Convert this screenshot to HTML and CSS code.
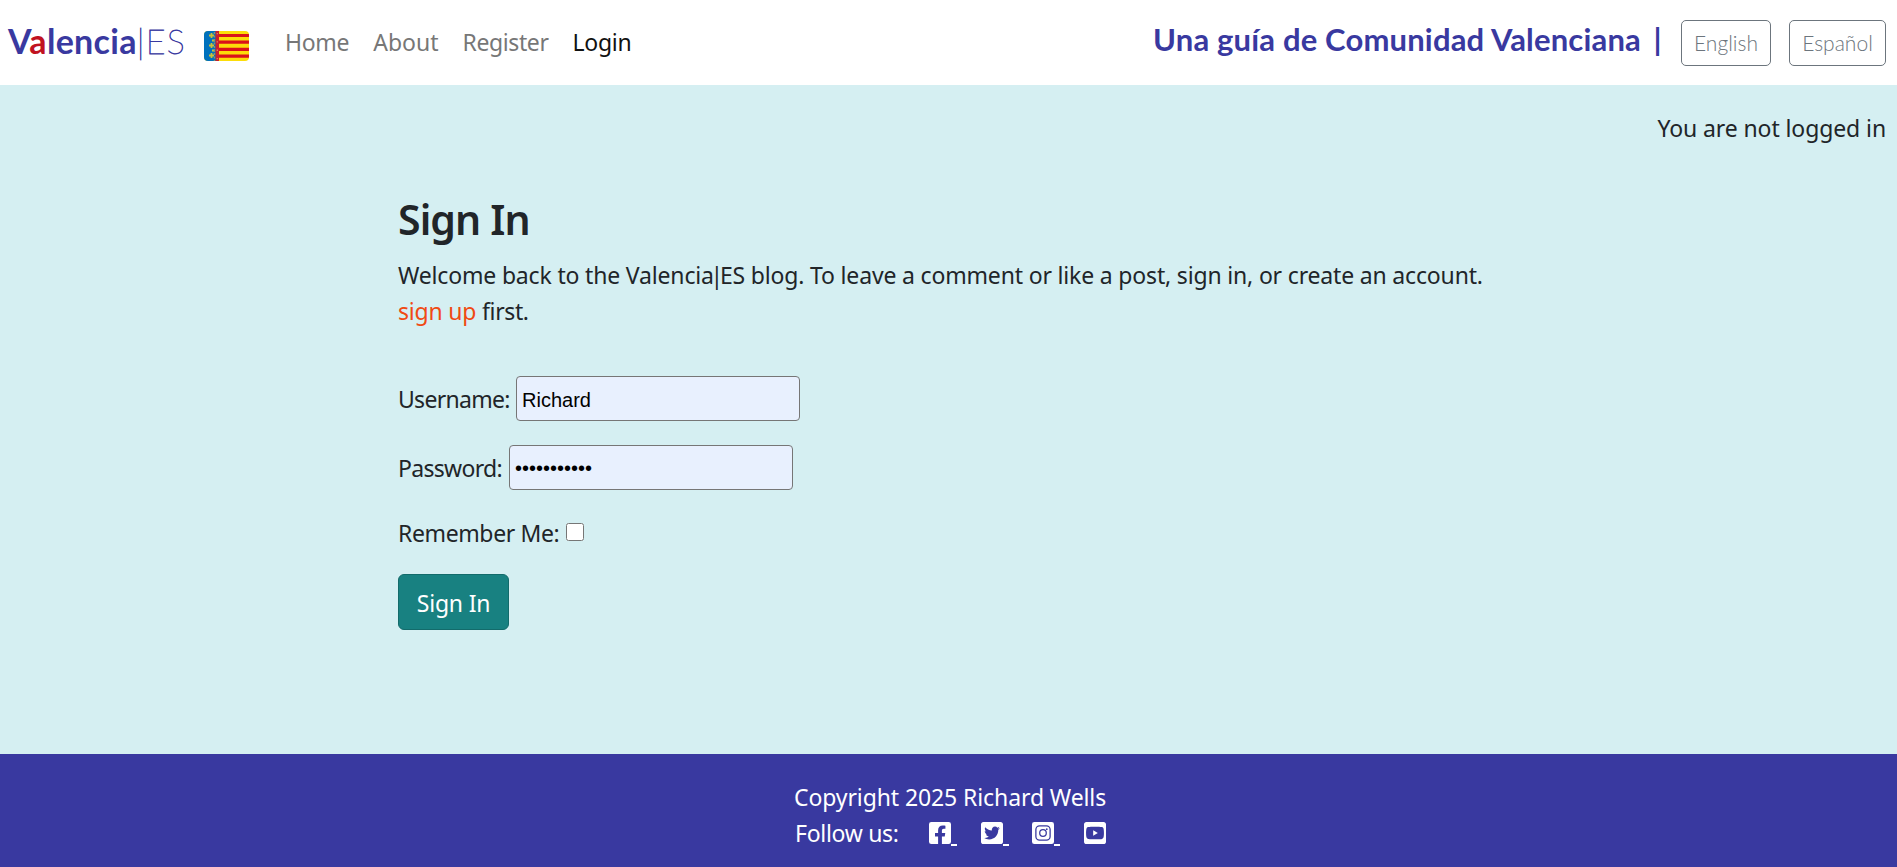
FILE: index.html
```html
<!DOCTYPE html>
<html lang="en">
<head>
<meta charset="utf-8">
<title>Valencia|ES</title>
<link rel="stylesheet" href="styles.css">
</head>
<body>
<nav class="navbar">
  <a class="brand"><span class="brand-bold">V<span class="brand-a">a</span>lencia</span><span class="brand-thin">|ES</span></a>
  <svg class="flag" viewBox="0 0 45 30">
    <clipPath id="flag-shape"><rect width="45" height="30" rx="4"/></clipPath>
    <g clip-path="url(#flag-shape)">
      <rect width="45" height="30" fill="#fcdd09"/>
      <path d="M15 4.500h30M15 11.200h30M15 18.300h30M15 25.200h30" stroke="#da121a" stroke-width="3.200"/>
      <rect width="12" height="30" fill="#0071bc"/>
      <path d="M5 4.500h5M5 14.500h5M5 24.500h5M7.500 2v5M7.500 12v5M7.500 22v5M8 9.500h3M8 19.500h3" stroke="#c9c03a" stroke-width="1.800"/>
      <path d="M10.500 1v29" stroke="#7d9a70" stroke-width="1.500" stroke-dasharray="2 1.500"/>
      <rect x="11.500" width="3.500" height="30" fill="#c8202c"/>
      <path d="M13.300 2v28" stroke="#d8846a" stroke-width="1.300" stroke-dasharray="1.300 7"/>
    </g>
  </svg>
  <div class="links"><a class="home">Home</a><a class="about">About</a><a class="register">Register</a><a class="login">Login</a></div>
  <div class="nav-right">
    <span class="tagline">Una guía de Comunidad Valenciana</span><span class="divider">|</span>
    <button class="lang lang-en">English</button>
    <button class="lang lang-es">Español</button>
  </div>
</nav>
<main class="page">
  <div class="status">You are not logged in</div>
  <section class="content">
    <h1>Sign In</h1>
    <p class="intro">Welcome back to the Valencia<span class="bar">|</span>ES blog. To leave a comment or like a post, sign in, or create an account.<br><a class="signup">sign up</a> <span class="first">first.</span></p>
    <form>
      <div class="field user"><label for="username">Username:</label><input id="username" type="text" value="Richard"></div>
      <div class="field pass"><label for="password">Password:</label><input id="password" type="password" value="12345678901"></div>
      <div class="field remember"><label for="remember">Remember Me:</label><input id="remember" class="check" type="checkbox"></div>
      <button class="submit" type="button">Sign In</button>
    </form>
  </section>
</main>
<footer class="footer">
  <div class="footer-inner">
    <div class="copy">Copyright 2025 Richard Wells</div>
    <div class="follow"><span class="follow-label">Follow us:</span>
      <a class="social"><svg viewBox="0 32 448 448"><path d="M400 32H48A48 48 0 0 0 0 80v352a48 48 0 0 0 48 48h137.250V327.690h-63V256h63v-54.640c0-62.150 37-96.480 93.670-96.480 27.140 0 55.520 4.840 55.520 4.840v61h-31.270c-30.810 0-40.420 19.120-40.420 38.730V256h68.780l-11 71.690h-57.780V480H400a48 48 0 0 0 48-48V80a48 48 0 0 0-48-48z"/></svg></a>
      <a class="social"><svg viewBox="0 32 448 448"><path d="M400 32H48C21.500 32 0 53.500 0 80v352c0 26.500 21.500 48 48 48h352c26.500 0 48-21.500 48-48V80c0-26.500-21.500-48-48-48zm-48.900 158.800c.2 2.800.2 5.700.2 8.500 0 86.700-66 186.600-186.600 186.600-37.200 0-71.700-10.800-100.700-29.400 5.300.6 10.400.8 15.800.8 30.700 0 58.900-10.400 81.400-28-28.800-.6-53-19.500-61.300-45.500 10.100 1.500 19.200 1.500 29.600-1.200-30-6.100-52.500-32.500-52.500-64.400v-.8c8.700 4.900 18.900 7.900 29.600 8.300a65.447 65.447 0 0 1-29.200-54.600c0-12.200 3.200-23.400 8.900-33.100 32.300 39.800 80.800 65.800 135.200 68.600-9.300-44.500 24-80.600 64-80.600 18.900 0 35.900 7.900 47.900 20.700 14.800-2.800 29-8.300 41.600-15.800-4.900 15.200-15.200 28-28.800 36.100 13.200-1.400 26-5.100 37.800-10.200-8.900 13.100-20.100 24.700-32.900 34z"/></svg></a>
      <a class="social"><svg viewBox="0 32 448 448"><rect y="32" width="448" height="448" rx="48"/><rect class="cut" x="79" y="111" width="290" height="290" rx="75"/><circle class="cut" cx="224" cy="256" r="67"/><circle class="dot" cx="301" cy="179" r="18"/></svg></a>
      <a class="social last"><svg viewBox="0 32 448 448"><path d="M186.800 202.100l95.200 54.100-95.200 54.100V202.100zM448 80v352c0 26.500-21.500 48-48 48H48c-26.500 0-48-21.500-48-48V80c0-26.500 21.500-48 48-48h352c26.500 0 48 21.500 48 48zm-42 176.300s0-59.600-7.600-88.200c-4.200-15.800-16.500-28.200-32.200-32.400C337.900 128 224 128 224 128s-113.900 0-142.200 7.700c-15.700 4.200-28 16.600-32.200 32.400-7.600 28.500-7.600 88.200-7.600 88.200s0 59.600 7.600 88.200c4.200 15.800 16.500 27.700 32.200 31.900C110.100 384 224 384 224 384s113.900 0 142.200-7.700c15.700-4.200 28-16.100 32.200-31.900 7.600-28.500 7.600-88.100 7.600-88.100z"/></svg></a>
    </div>
  </div>
</footer>
</body>
</html>
```
FILE: styles.css
```css
* { box-sizing: border-box; }
body {
  margin: 0;
  height: 867px;
  display: flex;
  flex-direction: column;
  overflow: hidden;
  background: #d5eff2;
  color: #212529;
  font: 23px/36px "Noto Sans", sans-serif;
  white-space: nowrap;
}
.navbar {
  height: 85px;
  flex: none;
  display: flex;
  align-items: flex-start;
  padding: 0 11px 0 8px;
  background: #fff;
}
.brand {
  width: 196px;
  padding-top: 20px;
  font: 34px/42px Lato, sans-serif;
  color: #3939a0;
}
.brand-bold { font-weight: 700; letter-spacing: 0.3px; }
.brand-a { color: #c1121f; }
.brand-thin { font-weight: 100; letter-spacing: 1.2px; -webkit-text-stroke: 0.8px #3939a0; }
.flag { width: 45px; height: 30px; margin-top: 31px; }
.links { display: flex; gap: 24px; padding: 24px 0 0 36px; color: #777; }
.home { letter-spacing: -0.3px; }
.register { letter-spacing: -0.4px; }
.login { color: #111; letter-spacing: -0.28px; }
.nav-right { display: flex; margin-left: auto; }
.tagline, .divider { font: 700 31px/36px Lato, sans-serif; color: #3939a0; padding-top: 21px; }
.tagline { letter-spacing: 0.17px; }
.divider { width: 3px; margin: 0 22px 0 15px; display: flex; justify-content: center; }
.lang {
  height: 46px;
  margin: 20px 0 0;
  padding: 0;
  border: 1px solid #6c757d;
  border-radius: 5px;
  background: none;
  color: #6c757d;
  font: 300 21px/40px Lato, sans-serif;
}
.lang-en { width: 90px; }
.lang-es { width: 97px; margin-left: 18px; }
.page { flex: 1; }
.status { padding: 25px 11px 0; text-align: right; letter-spacing: -0.1px; }
.content { padding: 47px 0 0 398px; }
h1 { margin: 0; font-size: 41px; font-weight: 600; line-height: 52px; height: 50px; letter-spacing: -0.9px; }
.intro { margin: 14px 0 0; letter-spacing: -0.17px; }
.bar { margin: 0 -3.2px; }
.signup { color: #f04a14; letter-spacing: -0.2px; }
.first { letter-spacing: -0.38px; }
.field { display: flex; }
.field input[type="text"], .field input[type="password"] {
  width: 284px;
  height: 45px;
  margin: 0;
  padding: 4px 5px 0;
  border: 1px solid #767676;
  border-radius: 4px;
  background: #e8f0fe;
  color: #000;
  font: 20px "Liberation Sans", sans-serif;
}
.field input[type="password"] { padding: 3px 5px 1px; }
.user { margin-top: 47px; }
.pass { margin-top: 24px; }
.remember { margin-top: 24px; height: 36px; }
.field label { padding-top: 5px; width: 118px; letter-spacing: -0.7px; }
.pass label { width: 111px; }
.remember label { padding-top: 1px; width: 168px; letter-spacing: -0.38px; }
.check { width: 18px; height: 18px; margin: 9px 0 0; }
.submit {
  display: block;
  width: 111px;
  height: 56px;
  margin-top: 24px;
  padding: 2px 0 0;
  border: 1px solid #136b6b;
  border-radius: 6px;
  background: #188181;
  color: #fff;
  font: 23px/36px "Noto Sans", sans-serif;
  letter-spacing: -0.2px;
}
.footer { flex: none; height: 113px; background: #3939a0; color: #fff; }
.footer-inner { width: 312px; margin: 0 0 0 795px; padding-top: 25px; }
.copy { margin-left: -1px; letter-spacing: -0.1px; }
.follow { display: flex; }
.follow-label { width: 134px; letter-spacing: -0.3px; }
.social { position: relative; width: 22px; height: 22px; margin: 7px 29.700px 0 0; }
.social svg { display: block; width: 22px; height: 22px; fill: #fff; }
.social::after { content: ""; position: absolute; left: 22px; top: 22px; width: 6px; height: 2px; background: #fff; }
.social.last { margin-right: 0; }
.social.last::after { display: none; }
.cut { fill: none; stroke: #3939a0; stroke-width: 26; }
.dot { fill: #3939a0; }
```
